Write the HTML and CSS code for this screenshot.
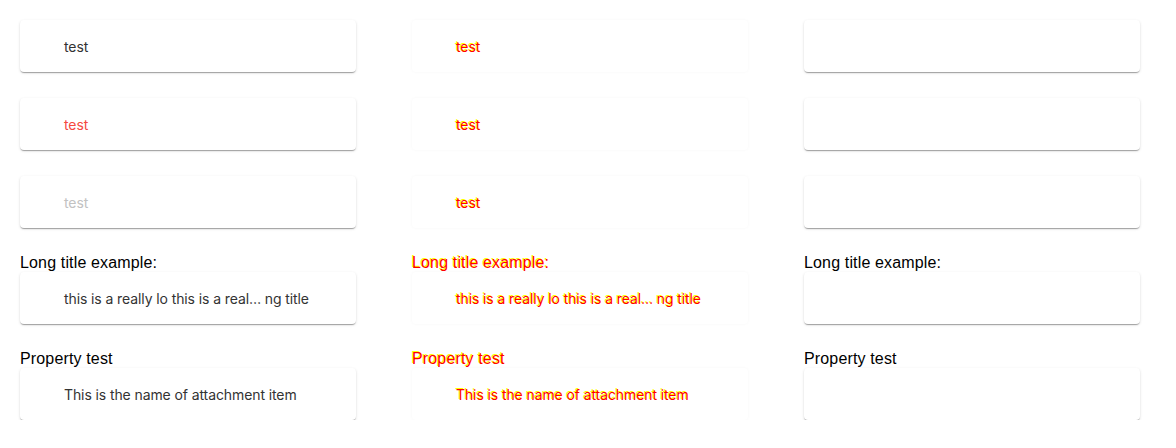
FILE: index.html
```html
<!DOCTYPE html>
<html>
<head>
<meta charset="utf-8">
<link rel="stylesheet" href="styles.css">
</head>
<body>
<div class="grid">
  <div class="col">
    <div class="item"><div class="card"><span class="txt">test</span></div></div>
    <div class="item"><div class="card"><span class="txt danger">test</span></div></div>
    <div class="item"><div class="card"><span class="txt disabled">test</span></div></div>
    <div class="item"><div class="label">Long title example:</div><div class="card"><span class="txt">this is a really lo this is a real… ng title</span></div></div>
    <div class="item"><div class="label">Property test</div><div class="card"><span class="txt">This is the name of attachment item</span></div></div>
  </div>
  <div class="col diff">
    <div class="item"><div class="card"><span class="txt">test</span></div></div>
    <div class="item"><div class="card"><span class="txt">test</span></div></div>
    <div class="item"><div class="card"><span class="txt">test</span></div></div>
    <div class="item"><div class="label">Long title example:</div><div class="card"><span class="txt">this is a really lo this is a real… ng title</span></div></div>
    <div class="item"><div class="label">Property test</div><div class="card"><span class="txt">This is the name of attachment item</span></div></div>
  </div>
  <div class="col">
    <div class="item"><div class="card"></div></div>
    <div class="item"><div class="card"></div></div>
    <div class="item"><div class="card"></div></div>
    <div class="item"><div class="label">Long title example:</div><div class="card"></div></div>
    <div class="item"><div class="label">Property test</div><div class="card"></div></div>
  </div>
</div>
</body>
</html>
```
FILE: styles.css
```css
html, body {
  margin: 0;
  padding: 0;
  background: #ffffff;
}
.grid {
  display: grid;
  grid-template-columns: repeat(3, 392px);
}
.col {
  display: flex;
  flex-direction: column;
  gap: 26px;
  padding: 20px 0 0 20px;
}
.item {
  display: flex;
  flex-direction: column;
  width: 336px;
}
.label {
  font-family: "Liberation Sans", Arial, sans-serif;
  font-size: 16px;
  letter-spacing: 0.15px;
  line-height: 18px;
  height: 18px;
  color: #000;
}
.card {
  height: 52px;
  box-sizing: border-box;
  border-radius: 4px;
  background: #fff;
  box-shadow: 0px 2px 1px -1px rgba(0,0,0,0.2), 0px 1px 1px 0px rgba(0,0,0,0.14), 0px 1px 3px 0px rgba(0,0,0,0.12);
  display: flex;
  align-items: center;
  padding-left: 44px;
}
.txt {
  font-family: Inter, "Noto Sans", sans-serif;
  font-size: 14px;
  letter-spacing: -0.1px;
  color: #333333;
  white-space: nowrap;
}
.txt.danger { color: #f5493f; }
.txt.disabled { color: #c2c2c2; }
.diff .card {
  box-shadow: 0 0 3px rgba(0,0,0,0.04);
}
.diff .txt, .diff .label {
  color: #ff0000;
  text-shadow: -1px -1px 0 #ffff00;
}
```
